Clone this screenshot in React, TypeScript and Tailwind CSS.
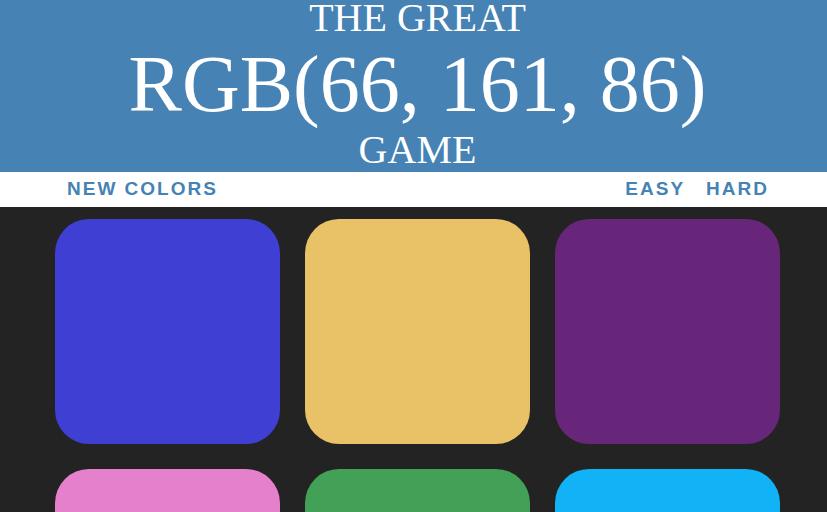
import React from "react";

const colors = [
  "#3f3fd4",
  "#e9c167",
  "#68267a",
  "#e480cc",
  "#42a156",
  "#12b2f6",
];

export default function App() {
  return (
    <div className="h-screen overflow-hidden bg-[#232323]">
      <header
        className="bg-[#4682b4] text-white text-center pl-[8px] pt-[2px] pb-[7px] uppercase"
        style={{ fontFamily: '"Liberation Serif", "Times New Roman", serif' }}
      >
        <div className="text-[40px] leading-[32px]">The Great</div>
        <div className="text-[80px] leading-[101px]">RGB(66, 161, 86)</div>
        <div className="text-[40px] leading-[30px]">Game</div>
      </header>
      <nav
        className="bg-white h-[35px] flex items-center justify-between pl-[67px] pr-[58px] text-[19px] font-bold tracking-[2px] text-[#4682b4] uppercase"
        style={{ fontFamily: '"Liberation Sans", Arial, sans-serif' }}
      >
        <button className="uppercase">New Colors</button>
        <div className="flex gap-[21px]">
          <button className="uppercase">Easy</button>
          <button className="uppercase">Hard</button>
        </div>
      </nav>
      <main className="grid grid-cols-[225px_225px_225px] gap-[25px] pl-[55px] pt-[12px]">
        {colors.map((c, i) => (
          <div
            key={i}
            className="h-[225px] rounded-[34px]"
            style={{ backgroundColor: c }}
          />
        ))}
      </main>
    </div>
  );
}
